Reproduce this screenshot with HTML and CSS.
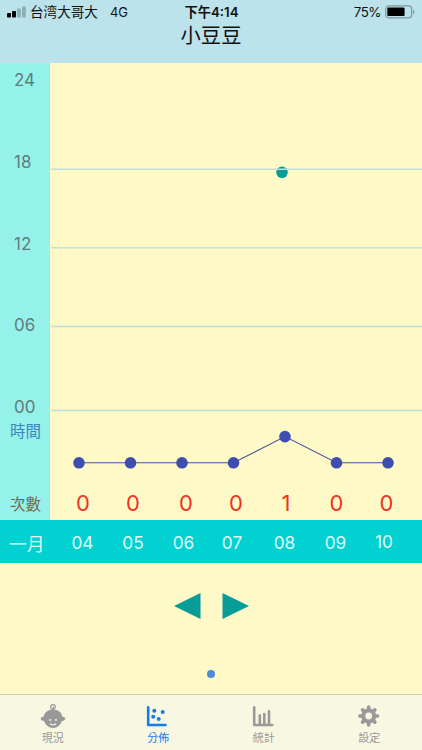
FILE: index.html
```html
<!DOCTYPE html>
<html lang="zh-Hant">
<head>
    <meta charset="utf-8">
    <title>小豆豆</title>
    <link rel="stylesheet" href="styles.css">
</head>
<body>
    <header class="header">
        <div class="status">
            <div class="status-left">
                <svg class="signal" width="20" height="12" viewBox="0 0 20 12">
                    <rect x="0" y="7" width="4" height="4.5" rx="1"/>
                    <rect x="5" y="5" width="4" height="6.5" rx="1"/>
                    <rect class="off" x="10" y="2.5" width="3.8" height="9" rx="1"/>
                    <rect class="off" x="15" y="0.5" width="3.8" height="11" rx="1"/>
                </svg>
                <span class="carrier">台湾大哥大</span>
                <span class="network">4G</span>
            </div>
            <div class="clock">下午4:14</div>
            <div class="status-right">
                <span class="percent">75%</span>
                <svg class="battery" width="31" height="14" viewBox="0 0 31 14">
                    <rect class="battery-case" x="0.7" y="0.8" width="26" height="12" rx="3"/>
                    <rect x="2.3" y="2.6" width="17.3" height="8.4" rx="1"/>
                    <path class="battery-tip" d="M28 5v4q1.5-.5 1.500-2T28 5z"/>
                </svg>
            </div>
        </div>
        <h1 class="title">小豆豆</h1>
    </header>

    <main class="chart">
        <div class="axis">
            <span class="hour">24</span>
            <span class="hour">18</span>
            <span class="hour">12</span>
            <span class="hour">06</span>
            <span class="hour">00</span>
            <span class="time-label">時間</span>
            <span class="count-label">次數</span>
        </div>
        <div class="plot">
            <svg class="graph" width="372" height="417" viewBox="50 63 372 417">
                <circle class="event" cx="282" cy="172.3" r="5.8"/>
                <path class="grid" d="M51 169.3H422M51 247.8H422M51 326.5H422M51 410.6H422"/>
                <polyline class="line" points="79,462.8 130.5,462.8 182,462.8 233.5,462.8 285,436.6 336.5,462.8 388,462.8"/>
                <g class="dots">
                    <circle cx="79" cy="462.8" r="5.8"/>
                    <circle cx="130.5" cy="462.8" r="5.8"/>
                    <circle cx="182" cy="462.8" r="5.8"/>
                    <circle cx="233.5" cy="462.8" r="5.8"/>
                    <circle cx="285" cy="436.6" r="5.8"/>
                    <circle cx="336.5" cy="462.8" r="5.8"/>
                    <circle cx="388" cy="462.8" r="5.8"/>
                </g>
            </svg>
            <div class="counts">
                <span>0</span><span>0</span><span>0</span><span>0</span><span>1</span><span>0</span><span>0</span>
            </div>
        </div>
    </main>

    <div class="days">
        <span class="month">一月</span>
        <span>04</span><span>05</span><span>06</span><span>07</span><span>08</span><span>09</span><span class="last">10</span>
    </div>

    <div class="pager">
        <div class="arrows">
            <svg width="27" height="26" viewBox="0 0 27 26"><path d="M0 13L26.500 0v26z"/></svg>
            <svg width="27" height="26" viewBox="0 0 27 26"><path d="M27 13L.5 0v26z"/></svg>
        </div>
        <div class="page-dot"></div>
    </div>

    <nav class="tabs">
        <a class="tab">
            <svg width="26" height="26" viewBox="0 -0.5 26 26">
                <circle cx="13" cy="3.4" r="2.3" fill="none" stroke="currentColor" stroke-width="1.2"/>
                <path d="M13 3.2q1.3 1.3 0 3.3" fill="none" stroke="currentColor" stroke-width="1.2"/>
                <path fill="currentColor" d="M13 6c5 0 8.600 3 9.300 7.200 1.600-.3 2.900.7 2.900 2s-1.300 2.300-3.200 2.100C20.500 21.700 17.200 24.500 13 24.500S5.500 21.700 4 17.300C2.100 17.500.8 16.500.8 15.200s1.300-2.300 2.900-2C4.400 9 8 6 13 6z"/>
                <circle class="face" cx="10.2" cy="16.5" r="1"/>
                <circle class="face" cx="16" cy="16.5" r="1"/>
                <path class="smile" d="M10 20.300q3 2.300 6 0"/>
            </svg>
            <span>現況</span>
        </a>
        <a class="tab active">
            <svg width="26" height="26" viewBox="0 1.6 26 26">
                <path d="M3.200 5.800v17.800h17.300" fill="none" stroke="currentColor" stroke-width="2.600" stroke-linecap="round" stroke-linejoin="round"/>
                <g fill="currentColor">
                    <circle cx="9.3" cy="9.3" r="2"/>
                    <circle cx="17.7" cy="10.6" r="2"/>
                    <circle cx="8.2" cy="15.3" r="2"/>
                    <circle cx="13.7" cy="17.7" r="2"/>
                </g>
            </svg>
            <span>分佈</span>
        </a>
        <a class="tab">
            <svg width="26" height="26" viewBox="0 1.6 26 26">
                <path d="M3.200 5.800v17.800h18M8.800 14v9M13.300 12.700v10.300M18 10v13" fill="none" stroke="currentColor" stroke-width="2.600" stroke-linecap="round" stroke-linejoin="round"/>
            </svg>
            <span>統計</span>
        </a>
        <a class="tab">
            <svg width="26" height="26" viewBox="0.3 1.8 26 26">
                <circle cx="13" cy="14.8" r="5.5" fill="none" stroke="currentColor" stroke-width="4.2"/>
                <path d="M13 8V6M13 21.600v2M6.200 14.800h-2M19.800 14.800h2M8.200 10L6.900 8.700M17.800 10l1.300-1.300M8.200 19.600l-1.300 1.300M17.800 19.600l1.300 1.300" fill="none" stroke="currentColor" stroke-width="3.700" stroke-linecap="round"/>
            </svg>
            <span>設定</span>
        </a>
    </nav>
</body>
</html>
```
FILE: styles.css
```css
body {
    margin: 0;
    height: 750px;
    display: flex;
    flex-direction: column;
    overflow: hidden;
    font-family: Inter, "Noto Sans CJK TC", sans-serif;
    background-color: #fef9c6;
}
.header {
    height: 63px;
    background-color: #bce2eb;
    color: #111;
}
.status {
    display: grid;
    grid-template-columns: 1fr auto 1fr;
    align-items: center;
    height: 24px;
    padding: 0 6px 0 7px;
    font-size: 13px;
    line-height: 24px;
}
.status-left, .status-right {
    display: flex;
    align-items: center;
}
.status-right {
    justify-content: flex-end;
    gap: 4px;
}
.signal {
    margin-right: 3px;
}
.signal .off {
    fill: #8fadb4;
}
.carrier {
    font-size: 13.6px;
}
.network {
    margin-left: 12px;
}
.clock {
    font-weight: 600;
    font-size: 13.3px;
}
.percent {
    font-size: 13.4px;
    letter-spacing: -0.5px;
}
.battery-case {
    fill: none;
    stroke: #7d979d;
    stroke-width: 1.2;
}
.battery-tip {
    fill: #7d979d;
}
.title {
    margin: 0;
    font-size: 20.3px;
    font-weight: 400;
    line-height: 24px;
    text-align: center;
}
.chart {
    display: flex;
    height: 457px;
}
.axis {
    box-sizing: border-box;
    width: 50px;
    padding: 7px 0 0 14px;
    display: flex;
    flex-direction: column;
    background-color: #95f2eb;
    color: #5f7c7b;
}
.hour {
    height: 20px;
    margin-bottom: 61.8px;
    font-size: 17px;
    line-height: 21px;
}
.time-label, .count-label {
    margin-left: -4px;
    font-size: 15.5px;
    line-height: 20px;
}
.time-label {
    margin-top: -56.8px;
    color: #3f82bd;
}
.count-label {
    margin-top: 53px;
    color: #79683f;
}
.plot {
    width: 372px;
}
.graph {
    display: block;
}
.grid {
    stroke: #bce0df;
    stroke-width: 1.5;
}
.event {
    fill: #069c98;
}
.line {
    fill: none;
    stroke: #4652a0;
    stroke-width: 1.1;
}
.dots {
    fill: #3f4db0;
}
.counts {
    display: grid;
    grid-template-columns: 50px 50px 56px 44px 56px 45px 55px;
    padding-left: 8px;
    color: #ee3420;
    font-size: 22px;
    line-height: 46px;
    text-align: center;
}
.days {
    display: grid;
    grid-template-columns: 58px 49px 52px 49px 48px 57px 45px 52px;
    height: 43px;
    background-color: #02d1d2;
    color: #dffcf9;
    font-size: 17.3px;
    line-height: 46px;
    text-align: center;
}
.month {
    padding-left: 9px;
    font-size: 17.8px;
    line-height: 50px;
    text-align: left;
}
.days .last {
    line-height: 44px;
}
.pager {
    flex: 1;
    display: flex;
    flex-direction: column;
    align-items: center;
    padding-top: 30px;
}
.arrows {
    display: flex;
    gap: 21px;
    fill: #069c98;
}
.page-dot {
    width: 8px;
    height: 8px;
    margin-top: 51px;
    border-radius: 50%;
    background-color: #4b8bdb;
}
.tabs {
    box-sizing: border-box;
    height: 56px;
    display: grid;
    grid-template-columns: repeat(4, 1fr);
    border-top: 1px solid #d1cfb6;
    background-color: #f8f7e2;
    color: #999;
}
.tab {
    display: flex;
    flex-direction: column;
    align-items: center;
    padding-top: 8px;
    font-size: 11px;
    line-height: 18px;
}
.active {
    color: #147bf3;
}
.face {
    fill: #f8f7e2;
}
.smile {
    fill: none;
    stroke: #f8f7e2;
    stroke-width: 1.1;
}
```
